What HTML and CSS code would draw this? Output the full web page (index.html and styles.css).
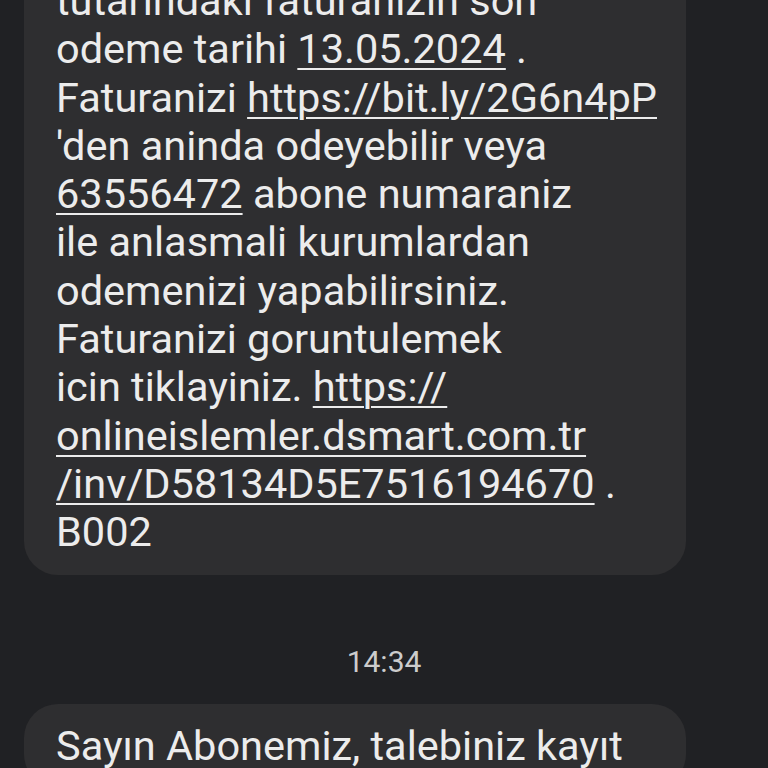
FILE: index.html
```html
<!DOCTYPE html>
<html lang="tr">
<head>
<meta charset="utf-8">
<title>Mesajlar</title>
<link rel="stylesheet" href="styles.css">
</head>
<body>
<main class="thread">
  <div class="bubble bubble-first">
    <p class="msg">tutarindaki faturanizin son<br>odeme tarihi <a class="lnk">13.05.2024</a> .<br>Faturanizi <a class="lnk">https://bit.ly/2G6n4pP</a><br>'den aninda odeyebilir veya<br><a class="lnk">63556472</a> abone numaraniz<br>ile anlasmali kurumlardan<br>odemenizi yapabilirsiniz.<br>Faturanizi goruntulemek<br>icin tiklayiniz. <a class="lnk">https://</a><br><a class="lnk">onlineislemler.dsmart.com.tr</a><br><a class="lnk">/inv/D58134D5E7516194670</a> .<br>B002</p>
  </div>
  <div class="time">14:34</div>
  <div class="bubble">
    <p class="msg">Sayın Abonemiz, talebiniz kayıt</p>
  </div>
</main>
</body>
</html>
```
FILE: styles.css
```css
html, body {
  margin: 0;
  padding: 0;
  background: #202124;
  height: 100%;
  overflow: hidden;
}
.thread {
  display: flex;
  flex-direction: column;
  align-items: flex-start;
  padding: 0 0 0 24px;
  margin-top: -41px;
}
.bubble {
  width: 662px;
  box-sizing: border-box;
  background: #2e2e30;
  border-radius: 34px;
  padding: 18px 20px 18px 32px;
}
.msg {
  margin: 0;
  font-family: Roboto, "Noto Sans", sans-serif;
  font-size: 41.5px;
  line-height: 48.3px;
  color: #ececec;
}
.lnk {
  color: inherit;
  text-decoration: underline;
  text-decoration-thickness: 2px;
  text-underline-offset: 5px;
}
.time {
  align-self: stretch;
  margin-left: -24px;
  text-align: center;
  font-family: Roboto, "Noto Sans", sans-serif;
  font-size: 30px;
  line-height: 40px;
  color: #cccccc;
  margin-top: 67px;
  margin-bottom: 22px;
}
```
